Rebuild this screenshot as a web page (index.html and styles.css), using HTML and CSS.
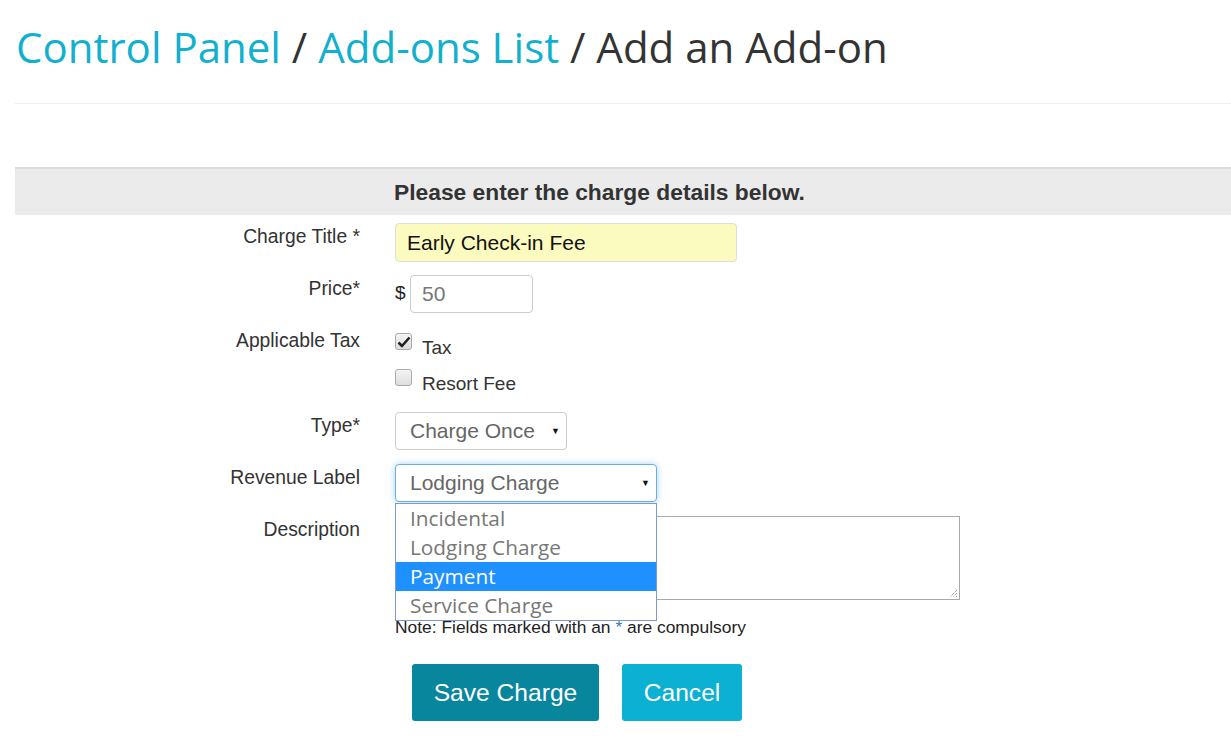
FILE: index.html
```html
<!DOCTYPE html>
<html>
<head>
<meta charset="utf-8">
<link rel="stylesheet" href="styles.css">
</head>
<body>
<div class="page">
  <h1 class="crumbs"><a class="crumb-link">Control Panel</a> / <a class="crumb-link">Add-ons List</a> / Add an Add-on</h1>
  <hr class="rule">
  <div class="panel-head"><span class="panel-title">Please enter the charge details below.</span></div>
  <form class="form">
    <div class="row row-title">
      <label class="lbl">Charge Title *</label>
      <div class="field"><div class="input input-title">Early Check-in Fee</div></div>
    </div>
    <div class="row row-price">
      <label class="lbl">Price*</label>
      <div class="field price-field"><span class="dollar">$</span><div class="input input-price">50</div></div>
    </div>
    <div class="row row-tax">
      <label class="lbl">Applicable Tax</label>
      <div class="field checks">
        <div class="check-line"><span class="box checked"><svg width="14" height="12" viewBox="0 0 14 12"><path d="M1.5 6.5 L5 10 L12.5 1.5" fill="none" stroke="#222" stroke-width="2.6" stroke-linejoin="round"/></svg></span><span class="check-text">Tax</span></div>
        <div class="check-line"><span class="box"></span><span class="check-text">Resort Fee</span></div>
      </div>
    </div>
    <div class="row row-type">
      <label class="lbl">Type*</label>
      <div class="field"><div class="select select-type"><span>Charge Once</span><span class="caret">▼</span></div></div>
    </div>
    <div class="row row-rev">
      <label class="lbl">Revenue Label</label>
      <div class="field rev-field">
        <div class="select select-rev focus"><span>Lodging Charge</span><span class="caret">▼</span></div>
        <ul class="dropdown">
          <li class="opt">Incidental</li>
          <li class="opt">Lodging Charge</li>
          <li class="opt active">Payment</li>
          <li class="opt">Service Charge</li>
        </ul>
      </div>
    </div>
    <div class="row row-desc">
      <label class="lbl">Description</label>
      <div class="field"><div class="textarea"><svg class="grip" width="9" height="9" viewBox="0 0 9 9"><path d="M8 1 L1 8 M8 4 L4 8 M8 7 L7 8" stroke="#777" stroke-width="1" stroke-dasharray="1 1"/></svg></div></div>
    </div>
    <div class="row row-note">
      <span class="lbl"></span>
      <div class="field note">Note: Fields marked with an <span class="star">*</span> are compulsory</div>
    </div>
    <div class="row row-btns">
      <span class="lbl"></span>
      <div class="field btns">
        <button type="button" class="btn btn-save">Save Charge</button>
        <button type="button" class="btn btn-cancel">Cancel</button>
      </div>
    </div>
  </form>
</div>
</body>
</html>
```
FILE: styles.css
```css
* { box-sizing: border-box; }
html, body { margin: 0; padding: 0; background: #fff; }
body { font-family: "Liberation Sans", Arial, sans-serif; color: #333; }
.page { padding-left: 15px; width: 1231px; overflow: hidden; }
.crumbs {
  margin: 0;
  padding: 20px 0 0 1px;
  height: 93px;
  font-family: "Open Sans", sans-serif;
  font-weight: 400;
  font-size: 42px;
  line-height: 54px;
  color: #333;
  white-space: nowrap;
}
.crumb-link { color: #12b0cf; text-decoration: none; }
.rule { margin: 10px 0 0 0; border: 0; border-top: 1px solid #eee; height: 0; }
.panel-head {
  margin-top: 63px;
  border-top: 2px solid #dcdcdc;
  background: #ebebeb;
  height: 48px;
  display: flex;
  align-items: center;
  padding-left: 379px;
}
.panel-title { font-weight: bold; font-size: 22.8px; color: #333; }
.form { margin: 0; padding-top: 8px; display: flex; flex-direction: column; }
.row { display: flex; gap: 35px; }
.lbl {
  width: 345px;
  flex: none;
  text-align: right;
  font-size: 19.3px;
  line-height: 22px;
  padding-top: 3px;
  color: #333;
}
.field { flex: none; }
.input {
  border: 1px solid #ccc;
  border-radius: 4px;
  font-size: 21px;
  display: flex;
  align-items: center;
}
.input-title { width: 342px; height: 39px; background: #fbfbbf; color: #111; padding-left: 11px; border-color: #ddd; }
.row-price { margin-top: 13px; }
.price-field { display: flex; align-items: flex-start; }
.dollar { font-size: 19px; padding-top: 7px; width: 15px; color: #222; }
.input-price { width: 123px; height: 38px; color: #777; padding-left: 11px; border-color: #ccc; }
.row-tax { margin-top: 14px; }
.checks { display: flex; flex-direction: column; padding-top: 6px; gap: 19px; }
.check-line { display: flex; align-items: flex-start; height: 17px; }
.box {
  width: 17px; height: 17px;
  border: 1px solid #aaa;
  border-radius: 3px;
  background: linear-gradient(#f4f4f4, #dedede);
  display: flex; align-items: center; justify-content: center;
  flex: none;
}
.check-text { font-size: 19px; margin-left: 10px; padding-top: 4px; line-height: 22px; }
.row-type { margin-top: 26px; }
.select {
  height: 38px;
  border: 1px solid #ccc;
  border-radius: 4px;
  display: flex;
  align-items: center;
  justify-content: space-between;
  padding: 0 6px 0 14px;
  font-size: 21px;
  color: #666;
  background: #fff;
}
.select-type { width: 172px; }
.select-rev { width: 262px; }
.select.focus { border-color: #66afe9; box-shadow: 0 0 7px rgba(102,175,233,0.55); }
.caret { font-size: 9px; color: #111; }
.row-rev { margin-top: 14px; }
.rev-field { position: relative; }
.dropdown {
  position: absolute;
  left: 0;
  top: 39px;
  width: 262px;
  margin: 0;
  padding: 0;
  list-style: none;
  border: 1px solid #7a9ad0;
  background: #fff;
  z-index: 5;
}
.opt {
  height: 29px;
  line-height: 29px;
  padding-left: 14px;
  font-family: "Open Sans", sans-serif;
  font-size: 20.8px;
  color: #777;
}
.opt.active { background: #1e90ff; color: #fff; }
.row-desc { margin-top: 14px; }
.textarea {
  width: 565px;
  height: 84px;
  border: 1px solid #a9a9a9;
  position: relative;
}
.grip { position: absolute; right: 1px; bottom: 1px; }
.row-note { margin-top: 17px; }
.row-note .lbl, .row-btns .lbl { padding: 0; }
.note { font-size: 17.4px; line-height: 20px; color: #222; }
.star { color: #2a7ab8; }
.row-btns { margin-top: 27px; }
.btns { display: flex; gap: 23px; padding-left: 17px; }
.btn {
  height: 57px;
  border: 0;
  border-radius: 3px;
  color: #fff;
  font-family: "Liberation Sans", Arial, sans-serif;
  font-size: 24.6px;
  padding: 0;
  cursor: pointer;
}
.btn-save { background: #08869e; width: 187px; }
.btn-cancel { background: #0bb0d3; width: 120px; }
```
